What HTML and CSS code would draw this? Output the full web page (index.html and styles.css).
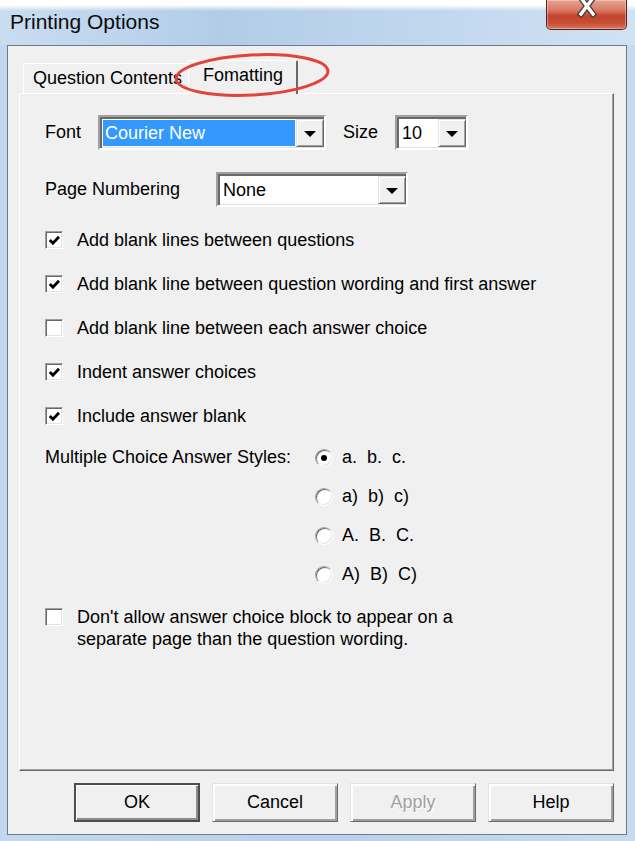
FILE: index.html
```html
<!DOCTYPE html>
<html lang="en">
<head>
<meta charset="utf-8">
<title>Printing Options</title>
<link rel="stylesheet" href="styles.css">
</head>
<body>
<div class="window">
  <div class="titlebar">
    <span class="title">Printing Options</span>
    <div class="close-btn">
      <svg width="81" height="30" viewBox="0 0 81 30">
        <path d="M35 -1 L47 15 M47 -1 L35 15" stroke="#4a3a3a" stroke-width="6" stroke-linecap="square" fill="none"/>
        <path d="M35 -1 L47 15 M47 -1 L35 15" stroke="#ffffff" stroke-width="3.4" stroke-linecap="square" fill="none"/>
      </svg>
    </div>
  </div>

  <div class="client">
    <div class="tabs">
      <div class="tab">Question Contents</div>
      <div class="tab active">Fomatting</div>
      <svg class="tab-mark" width="165" height="50" viewBox="0 0 165 50">
        <ellipse cx="82" cy="25" rx="76" ry="20" transform="rotate(-3 82 25)" fill="none" stroke="#e2433c" stroke-width="3"/>
      </svg>
    </div>

    <div class="page">
      <div class="row">
        <span class="lbl lbl-font">Font</span>
        <div class="combo combo-font">
          <span class="field selected">Courier New</span>
          <span class="drop"><i class="arrow"></i></span>
        </div>
        <span class="lbl lbl-size">Size</span>
        <div class="combo combo-size">
          <span class="field">10</span>
          <span class="drop"><i class="arrow"></i></span>
        </div>
      </div>

      <div class="row row-page">
        <span class="lbl lbl-page">Page Numbering</span>
        <div class="combo combo-page">
          <span class="field">None</span>
          <span class="drop"><i class="arrow"></i></span>
        </div>
      </div>

      <ul class="checks">
        <li class="check"><span class="box"><svg width="13" height="13" viewBox="0 0 13 13"><path d="M1.8 6 L4.9 9.2 L11 2.8" stroke="#000" stroke-width="2.8" fill="none"/></svg></span>Add blank lines between questions</li>
        <li class="check"><span class="box"><svg width="13" height="13" viewBox="0 0 13 13"><path d="M1.8 6 L4.9 9.2 L11 2.8" stroke="#000" stroke-width="2.8" fill="none"/></svg></span>Add blank line between question wording and first answer</li>
        <li class="check"><span class="box"></span>Add blank line between each answer choice</li>
        <li class="check"><span class="box"><svg width="13" height="13" viewBox="0 0 13 13"><path d="M1.8 6 L4.9 9.2 L11 2.8" stroke="#000" stroke-width="2.8" fill="none"/></svg></span>Indent answer choices</li>
        <li class="check"><span class="box"><svg width="13" height="13" viewBox="0 0 13 13"><path d="M1.8 6 L4.9 9.2 L11 2.8" stroke="#000" stroke-width="2.8" fill="none"/></svg></span>Include answer blank</li>
      </ul>

      <div class="styles">
        <span class="styles-label">Multiple Choice Answer Styles:</span>
        <div class="radios">
          <div class="radio"><span class="dot on"></span>a.&nbsp; b.&nbsp; c.</div>
          <div class="radio"><span class="dot"></span>a)&nbsp; b)&nbsp; c)</div>
          <div class="radio"><span class="dot"></span>A.&nbsp; B.&nbsp; C.</div>
          <div class="radio"><span class="dot"></span>A)&nbsp; B)&nbsp; C)</div>
        </div>
      </div>

      <div class="check multi">
        <span class="box"></span>
        <span>Don't allow answer choice block to appear on a<br>separate page than the question wording.</span>
      </div>
    </div>

    <div class="buttons">
      <div class="btn default">OK</div>
      <div class="btn">Cancel</div>
      <div class="btn disabled">Apply</div>
      <div class="btn">Help</div>
    </div>
  </div>
</div>
</body>
</html>
```

FILE: styles.css
```css
* {
  box-sizing: border-box;
}

html,
body {
  margin: 0;
  padding: 0;
}

body {
  width: 635px;
  height: 841px;
  overflow: hidden;
  font-family: "Liberation Sans", Arial, sans-serif;
  font-size: 18px;
  color: #000;
  background: #bfd5ec;
}

/* Aero window frame */
.window {
  display: flex;
  flex-direction: column;
  height: 841px;
  background: linear-gradient(to right, #c3d8ee, #b8d0ea 50%, #c7dbf0);
}

.titlebar {
  height: 45px;
  flex: none;
  display: flex;
  align-items: flex-start;
  padding-left: 10px;
  background:
    linear-gradient(to bottom, #ffffff 0, #ffffff 5px, rgba(255, 255, 255, 0) 11px),
    linear-gradient(to right, #c9ddf1 0%, #b2cce8 35%, #bed5ed 62%, #d0e2f4 100%);
}

.title {
  font-size: 21px;
  line-height: 24px;
  margin-top: 10px;
  color: #0b0b0b;
}

.close-btn {
  margin-left: auto;
  margin-right: 8px;
  width: 81px;
  height: 30px;
  border: 1px solid #5a2119;
  border-top: none;
  border-radius: 0 0 5px 5px;
  background: linear-gradient(to bottom, #e6a392 0%, #d97a64 35%, #c2432c 55%, #c84f37 80%, #d9785f 100%);
  box-shadow: inset 0 0 0 1px rgba(255, 255, 255, 0.35);
  overflow: hidden;
}

.close-btn svg {
  display: block;
  margin: -1px 0 0 -1px;
}

/* dialog client area */
.client {
  flex: 1;
  margin: 0 8px 6px 7px;
  border: 1px solid #6f7d8b;
  background: #f0f0f0;
  display: flex;
  flex-direction: column;
  padding: 14px 12px 12px 11px;
}

/* tab strip */
.tabs {
  position: relative;
  z-index: 1;
  height: 33px;
  flex: none;
  display: flex;
  align-items: flex-end;
  padding-left: 4px;
}

.tab {
  height: 30px;
  width: 167px;
  padding-left: 9px;
  line-height: 29px;
  white-space: nowrap;
  background: #f0f0f0;
  border-top: 1px solid #ffffff;
  border-left: 1px solid #ffffff;
  border-right: 1px solid #a0a0a0;
  border-radius: 2px 2px 0 0;
}

.tab.active {
  height: 34px;
  width: 110px;
  margin-left: -2px;
  margin-bottom: -1px;
  padding-left: 14px;
  line-height: 29px;
  border-right: 2px solid #696969;
}

.tab-mark {
  position: absolute;
  left: 151px;
  top: -10px;
  pointer-events: none;
}

/* tab page */
.page {
  height: 678px;
  flex: none;
  border: 1px solid;
  border-color: #ffffff #696969 #696969 #ffffff;
  box-shadow: inset -1px -1px 0 #a0a0a0;
  padding: 21px 0 0 25px;
  display: flex;
  flex-direction: column;
}

.row {
  display: flex;
  align-items: center;
  height: 35px;
}

.row-page {
  margin-top: 22px;
}

.lbl {
  white-space: nowrap;
}

.lbl-font {
  width: 53px;
}

.lbl-size {
  margin-left: 17px;
  width: 52px;
}

.lbl-page {
  width: 171px;
}

/* combo boxes */
.combo {
  display: flex;
  height: 35px;
  border: 2px solid;
  border-color: #a0a0a0 #ffffff #ffffff #a0a0a0;
  box-shadow: inset 2px 2px 0 #696969, inset -1px -1px 0 #e3e3e3;
  background: #ffffff;
  padding: 2px 0 1px 3px;
}

.combo-font {
  width: 228px;
}

.combo-size {
  width: 73px;
}

.combo-page {
  width: 192px;
}

.field {
  flex: 1;
  margin: 1px 1px 1px 0;
  padding-left: 2px;
  line-height: 26px;
  white-space: nowrap;
  overflow: hidden;
}

.field.selected {
  background: #3399ff;
  color: #ffffff;
}

.drop {
  width: 28px;
  height: 28px;
  flex: none;
  border: 1px solid;
  border-color: #e3e3e3 #696969 #696969 #e3e3e3;
  box-shadow: inset 1px 1px 0 #ffffff, inset -1px -1px 0 #a0a0a0;
  background: #f0f0f0;
  display: flex;
  align-items: center;
  justify-content: center;
}

.arrow {
  width: 0;
  height: 0;
  border-left: 6px solid transparent;
  border-right: 6px solid transparent;
  border-top: 6px solid #000;
  margin-top: 1px;
}

/* check boxes */
.checks {
  list-style: none;
  margin: 11px 0 0;
  padding: 0;
}

.check {
  display: flex;
  align-items: center;
  height: 44px;
  white-space: nowrap;
}

.box {
  width: 18px;
  height: 18px;
  flex: none;
  margin-right: 14px;
  border: 1px solid;
  border-color: #a0a0a0 #ffffff #ffffff #a0a0a0;
  box-shadow: inset 1px 1px 0 #696969, inset -1px -1px 0 #e3e3e3;
  background: #ffffff;
  display: flex;
  align-items: center;
  justify-content: center;
}

.box svg {
  display: block;
}

/* answer style radios */
.styles {
  display: grid;
  grid-template-columns: 270px auto;
}

.styles-label {
  line-height: 39px;
  white-space: nowrap;
}

.radio {
  display: flex;
  align-items: center;
  height: 39px;
  white-space: nowrap;
}

.dot {
  width: 18px;
  height: 18px;
  flex: none;
  margin-right: 9px;
  border-radius: 50%;
  border: 1px solid;
  border-color: #a0a0a0 #ffffff #ffffff #a0a0a0;
  box-shadow: inset 1px 1px 0 #696969, inset -1px -1px 0 #e3e3e3;
  background: #ffffff;
  display: flex;
  align-items: center;
  justify-content: center;
}

.dot.on::after {
  content: "";
  width: 6px;
  height: 6px;
  border-radius: 50%;
  background: #000;
}

.check.multi {
  height: auto;
  margin-top: 12px;
  align-items: flex-start;
  line-height: 22px;
}

.check.multi .box {
  margin-top: 2px;
}

/* dialog buttons */
.buttons {
  display: flex;
  justify-content: flex-end;
  gap: 12px;
  margin-top: 12px;
}

.btn {
  width: 126px;
  height: 39px;
  border: 1px solid;
  border-color: #e3e3e3 #696969 #696969 #e3e3e3;
  box-shadow: inset 2px 2px 0 #ffffff, inset -2px -2px 0 #a0a0a0;
  background: #f0f0f0;
  display: flex;
  align-items: center;
  justify-content: center;
}

.btn.default {
  border: 2px solid #4d4d4d;
  box-shadow: inset 1px 1px 0 #ffffff, inset -2px -2px 0 #8c8c8c;
}

.btn.disabled {
  color: #a0a0a0;
  text-shadow: 1px 1px 0 #ffffff;
}
```
